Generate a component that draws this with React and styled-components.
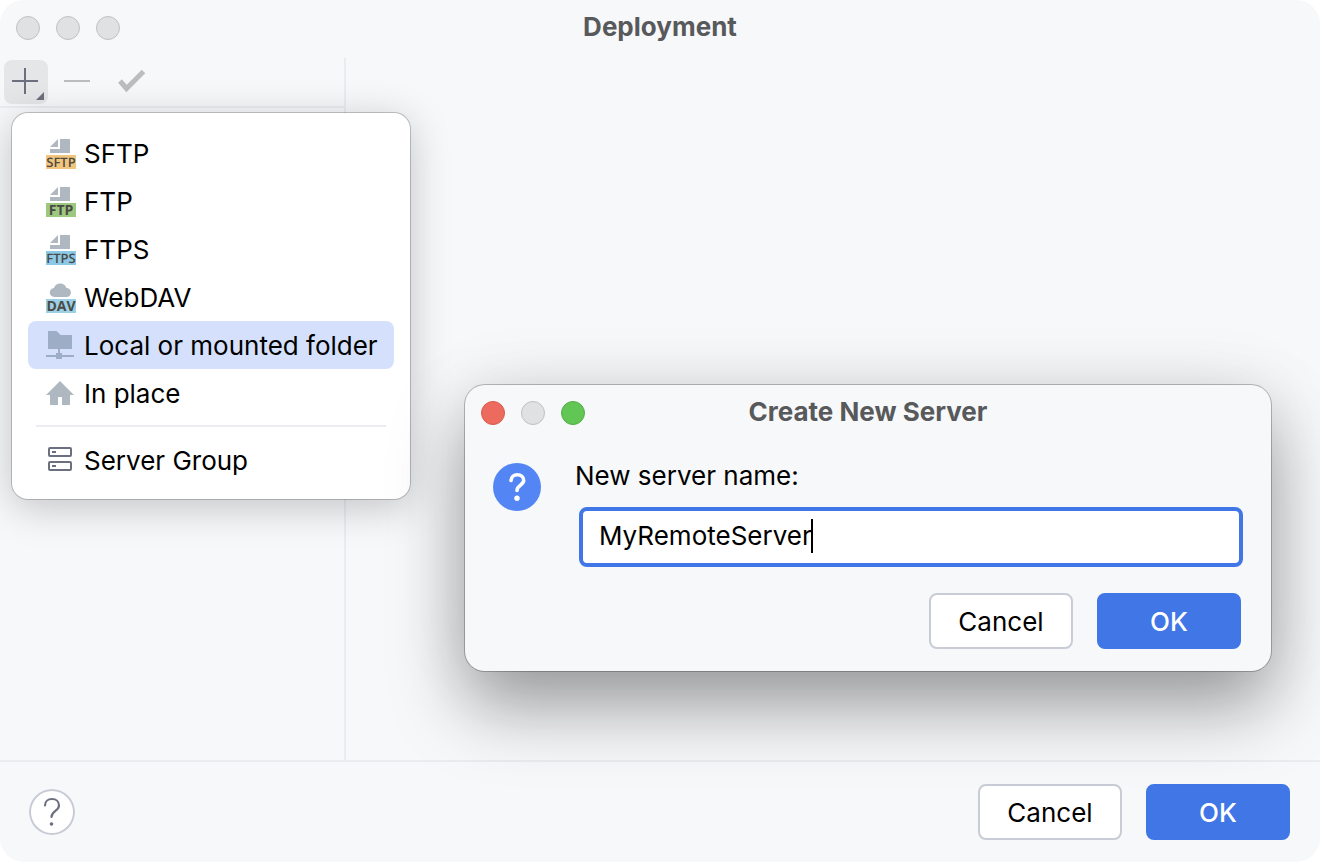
import { useState } from "react";
import styled, { createGlobalStyle } from "styled-components";

const servers = [
  { id: "sftp", label: "SFTP", icon: <ProtocolIcon text="SFTP" color="#f2c57c" /> },
  { id: "ftp", label: "FTP", icon: <ProtocolIcon text="FTP" color="#9cc97f" /> },
  { id: "ftps", label: "FTPS", icon: <ProtocolIcon text="FTPS" color="#8bc9e6" /> },
  { id: "webdav", label: "WebDAV", icon: <DavIcon /> },
  { id: "local", label: "Local or mounted folder", icon: <FolderIcon />, selected: true },
  { id: "inplace", label: "In place", icon: <HomeIcon /> },
];

export default function App() {
  const [name, setName] = useState("MyRemoteServer");

  return (
    <>
      <GlobalStyle />
      <Window>
        <TitleBar>
          <Lights>
            <Light />
            <Light />
            <Light />
          </Lights>
          <h1>Deployment</h1>
        </TitleBar>

        <Body>
          <Sidebar>
            <Toolbar>
              <ToolButton $active aria-label="Add">
                <svg viewBox="0 0 44 44">
                  <path d="M8 21H34M21 8V34" stroke="#6c707e" strokeWidth="2" />
                  <path d="M32 40L40 32V40Z" fill="#6c707e" />
                </svg>
              </ToolButton>
              <ToolButton disabled aria-label="Remove">
                <svg viewBox="0 0 44 44">
                  <path d="M8 21H34" stroke="#bdbdbd" strokeWidth="2" />
                </svg>
              </ToolButton>
              <ToolButton disabled aria-label="Use as default">
                <svg viewBox="0 0 44 44">
                  <path
                    d="M12 21L18.5 28.5L35.5 11.5"
                    fill="none"
                    stroke="#bdbdbd"
                    strokeWidth="5"
                  />
                </svg>
              </ToolButton>
            </Toolbar>
          </Sidebar>
        </Body>

        <Footer>
          <HelpButton aria-label="Help">
            <svg viewBox="0 0 46 46">
              <path
                d="M16 16.5C16 12.5 19 10 23 10C27 10 30 12.5 30 16.5C30 22 22.5 22 22.5 28"
                fill="none"
                stroke="#6c707e"
                strokeWidth="2.2"
                strokeLinecap="round"
              />
              <circle cx="22.5" cy="35" r="1.8" fill="#6c707e" />
            </svg>
          </HelpButton>
          <Actions>
            <Button>Cancel</Button>
            <Button $primary>OK</Button>
          </Actions>
        </Footer>

        <Menu>
          {servers.map((item) => (
            <MenuItem key={item.id} $selected={item.selected}>
              {item.icon}
              <span>{item.label}</span>
            </MenuItem>
          ))}
          <Separator />
          <MenuItem>
            <GroupIcon />
            <span>Server Group</span>
          </MenuItem>
        </Menu>

        <Dialog role="dialog" aria-labelledby="dialog-title">
          <TitleBar>
            <Lights>
              <Light $color="#ed6a5e" $edge="#d9584d" />
              <Light />
              <Light $color="#62c655" $edge="#52ae46" />
            </Lights>
            <h1 id="dialog-title">Create New Server</h1>
          </TitleBar>
          <DialogBody>
            <QuestionIcon />
            <Form>
              <label htmlFor="server-name">New server name:</label>
              <Field>
                <input
                  id="server-name"
                  value={name}
                  spellCheck={false}
                  onChange={(e) => setName(e.target.value)}
                />
                <Caret />
              </Field>
            </Form>
          </DialogBody>
          <Actions $inset>
            <Button>Cancel</Button>
            <Button $primary>OK</Button>
          </Actions>
        </Dialog>
      </Window>
    </>
  );
}

function ProtocolIcon({ text, color }) {
  return (
    <Icon viewBox="0 0 32 32" $long={text.length > 3}>
      <path d="M6 10L14 2V10ZM16 2H26V16H6V12H16Z" fill="#afb8c0" />
      <rect x="2" y="18" width="30" height="14" fill={color} />
      <text x="17" y="30" textAnchor="middle">
        {text}
      </text>
    </Icon>
  );
}

function DavIcon() {
  return (
    <Icon viewBox="0 0 32 32">
      <path
        d="M10.5 16A4.5 4.5 0 0 1 10 7A6.5 6.5 0 0 1 22.4 7A4.5 4.5 0 0 1 22.5 16Z"
        fill="#afb8c0"
      />
      <rect x="2" y="18" width="30" height="14" fill="#9bd0e6" />
      <text x="17" y="30" textAnchor="middle">
        DAV
      </text>
    </Icon>
  );
}

function FolderIcon() {
  return (
    <Icon viewBox="0 0 32 32">
      <path
        d="M4 2H12.5L16.5 6H28V20H16V24H18V26H30V28H18V30H12V28H2V26H12V24H14V20H4Z"
        fill="#9dadc6"
      />
    </Icon>
  );
}

function HomeIcon() {
  return (
    <Icon viewBox="0 0 32 32">
      <path d="M16 4L30 18H26V28H18V20H14V28H6V18H2Z" fill="#afb8c0" />
    </Icon>
  );
}

function GroupIcon() {
  return (
    <Icon viewBox="0 0 32 32">
      <g fill="none" stroke="#6c707e" strokeWidth="2">
        <rect x="5" y="4" width="22" height="8" rx="1" />
        <rect x="5" y="18" width="22" height="8" rx="1" />
        <path d="M8 8H12M8 22H12" />
      </g>
    </Icon>
  );
}

function QuestionIcon() {
  return (
    <svg width="48" height="48" viewBox="0 0 48 48">
      <circle cx="24" cy="24" r="24" fill="#5385f4" />
      <path
        d="M18 17.5C18.3 14 20.8 11.8 24.3 11.8C28 11.8 30.7 14 30.7 17.3C30.7 22 24 22.3 24 27.5"
        fill="none"
        stroke="#fff"
        strokeWidth="3.6"
        strokeLinecap="round"
      />
      <circle cx="24" cy="35.3" r="2.7" fill="#fff" />
    </svg>
  );
}

const GlobalStyle = createGlobalStyle`
  * {
    box-sizing: border-box;
  }

  body {
    margin: 0;
    background: #fff;
    color: #000;
    font: 26px/32px Inter, sans-serif;
  }

  button,
  input {
    font: inherit;
    color: inherit;
  }
`;

const Window = styled.div`
  position: relative;
  display: flex;
  flex-direction: column;
  min-height: 100vh;
  border-radius: 24px;
  background: #f7f8fa;
  overflow: hidden;
`;

const TitleBar = styled.header`
  display: grid;
  grid-template-columns: 1fr auto 1fr;
  align-items: center;
  height: 58px;
  padding: 0 16px 2px;

  h1 {
    margin: 0;
    padding-bottom: 2px;
    font-size: 26px;
    font-weight: 700;
    color: #58595b;
  }
`;

const Lights = styled.div`
  display: flex;
  gap: 16px;
`;

const Light = styled.span`
  width: 24px;
  height: 24px;
  border-radius: 50%;
  border: 1px solid ${(props) => props.$edge || "#bfc0c1"};
  background: ${(props) => props.$color || "#e0e1e2"};
`;

const Body = styled.main`
  flex: 1;
  display: flex;
`;

const Sidebar = styled.aside`
  width: 346px;
  border-right: 2px solid #ebecf0;
`;

const Toolbar = styled.div`
  display: flex;
  gap: 8px;
  padding: 2px 4px;
  border-bottom: 2px solid #ebecf0;
`;

const ToolButton = styled.button`
  width: 44px;
  height: 44px;
  padding: 0;
  border: none;
  border-radius: 8px;
  background: ${(props) => (props.$active ? "#e5e6e8" : "transparent")};

  svg {
    display: block;
  }
`;

const Footer = styled.footer`
  display: flex;
  align-items: center;
  justify-content: space-between;
  padding: 22px 30px 22px 29px;
  border-top: 2px solid #ebecf0;
`;

const HelpButton = styled.button`
  width: 46px;
  height: 46px;
  padding: 0;
  border: none;
  border-radius: 50%;
  background: #fff;
  box-shadow: inset 0 0 0 2px #c9ccd6;

  svg {
    display: block;
  }
`;

const Actions = styled.div`
  display: flex;
  justify-content: flex-end;
  gap: 24px;
  padding: ${(props) => (props.$inset ? "26px 30px 22px" : "0")};
`;

const Button = styled.button`
  width: 144px;
  height: 56px;
  padding: 2px 0 0;
  border: 2px solid ${(props) => (props.$primary ? "#4176e6" : "#c9ccd6")};
  border-radius: 8px;
  background: ${(props) => (props.$primary ? "#4176e6" : "#fff")};
  color: ${(props) => (props.$primary ? "#fff" : "#000")};
  font-weight: ${(props) => (props.$primary ? 500 : 400)};
`;

const Menu = styled.div`
  position: absolute;
  top: 113px;
  left: 12px;
  width: 398px;
  padding: 16px 16px 15px;
  border-radius: 16px;
  background: #fff;
  box-shadow:
    0 0 0 1px rgba(0, 0, 0, 0.2),
    0 8px 40px rgba(0, 0, 0, 0.22);
`;

const MenuItem = styled.button`
  display: flex;
  align-items: center;
  gap: 8px;
  width: 100%;
  height: 48px;
  padding: 0 16px;
  border: none;
  border-radius: 8px;
  background: ${(props) => (props.$selected ? "#d5e1fc" : "transparent")};
  text-align: left;
  white-space: nowrap;

  span {
    padding-top: 2px;
  }
`;

const Icon = styled.svg`
  flex: none;
  width: 32px;
  height: 32px;
  overflow: visible;

  text {
    font-family: "Open Sans", sans-serif;
    font-size: ${(props) => (props.$long ? "13px" : "14px")};
    font-weight: ${(props) => (props.$long ? 600 : 700)};
    text-rendering: geometricPrecision;
    fill: #4b4a45;
  }
`;

const Separator = styled.hr`
  height: 2px;
  margin: 8px 8px 9px;
  border: none;
  background: #ebecf0;
`;

const Dialog = styled.section`
  position: absolute;
  top: 385px;
  left: 465px;
  width: 806px;
  border-radius: 20px;
  background: #f7f8fa;
  box-shadow:
    0 0 0 1px rgba(0, 0, 0, 0.24),
    0 36px 72px rgba(0, 0, 0, 0.36),
    0 0 72px rgba(0, 0, 0, 0.08);
`;

const DialogBody = styled.div`
  display: flex;
  gap: 32px;
  padding: 20px 28px 0;
`;

const Form = styled.div`
  flex: 1;
  display: flex;
  flex-direction: column;
  gap: 15px;
  margin-top: -3px;

  label {
    padding-left: 2px;
  }
`;

const Field = styled.div`
  display: flex;
  align-items: center;
  height: 60px;
  margin-left: 6px;
  padding: 0 16px 2px;
  border: 4px solid #4176e6;
  border-radius: 8px;
  background: #fff;

  input {
    field-sizing: content;
    padding: 0;
    border: none;
    outline: none;
    background: transparent;
    caret-color: transparent;
  }
`;

const Caret = styled.i`
  width: 2px;
  height: 34px;
  margin-left: -1px;
  background: #000;
`;
